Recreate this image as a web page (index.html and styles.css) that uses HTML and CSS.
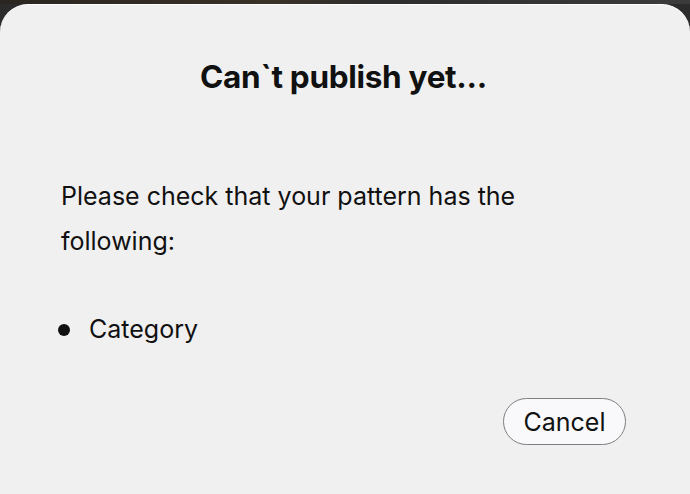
FILE: index.html
```html
<!DOCTYPE html>
<html lang="en">
<head>
  <meta charset="UTF-8" />
  <meta name="viewport" content="width=device-width, initial-scale=1.0"/>
  <title>Can`t publish yet</title>
  <link rel="stylesheet" href="styles.css">
</head>
<body>

<div class="backdrop"></div>

<div class="sheet">
  <h2>Can`t publish yet...</h2>

  <p class="message">Please check that your pattern has the following:</p>

  <ul class="missing">
    <li>Category</li>
  </ul>

  <div class="actions">
    <button class="cancel">Cancel</button>
  </div>
</div>

</body>
</html>
```

FILE: styles.css
```css
body {
  margin: 0;
  font-family: 'Inter', 'Noto Sans', sans-serif;
  background: #2b2b2b;
  color: #111;
  height: 494px;
  overflow: hidden;
}

.backdrop {
  height: 4px;
  background: linear-gradient(90deg, #2a2520 0%, #3a3127 40%, #2d2d2d 55%, #3b3b3b 100%);
}

.sheet {
  background: #f0f0f0;
  border-top: 1px solid #ffffff;
  border-radius: 28px 28px 0 0;
  height: 490px;
  padding: 0 64px 0 61px;
  box-sizing: border-box;
}

h2 {
  margin: 0;
  padding-top: 52px;
  text-align: center;
  font-size: 31.5px;
  font-weight: 700;
  letter-spacing: -0.3px;
  line-height: 40px;
}

.message {
  margin: 77px 0 0;
  font-size: 25px;
  line-height: 45px;
  max-width: 480px;
}

.missing {
  list-style: none;
  margin: 50px 0 0;
  padding-left: 28px;
  font-size: 25px;
  line-height: 30px;
}

.missing li {
  position: relative;
}

.missing li::before {
  content: "";
  position: absolute;
  left: -31px;
  top: 10px;
  width: 12px;
  height: 12px;
  border-radius: 50%;
  background: #111;
}

.actions {
  display: flex;
  justify-content: flex-end;
  margin-top: 54px;
}

.cancel {
  font-family: inherit;
  font-size: 25px;
  color: #111;
  background: #f9f9fb;
  border: 1.5px solid #7e7e7e;
  border-radius: 24px;
  width: 123px;
  height: 47px;
  padding: 0;
}
```
